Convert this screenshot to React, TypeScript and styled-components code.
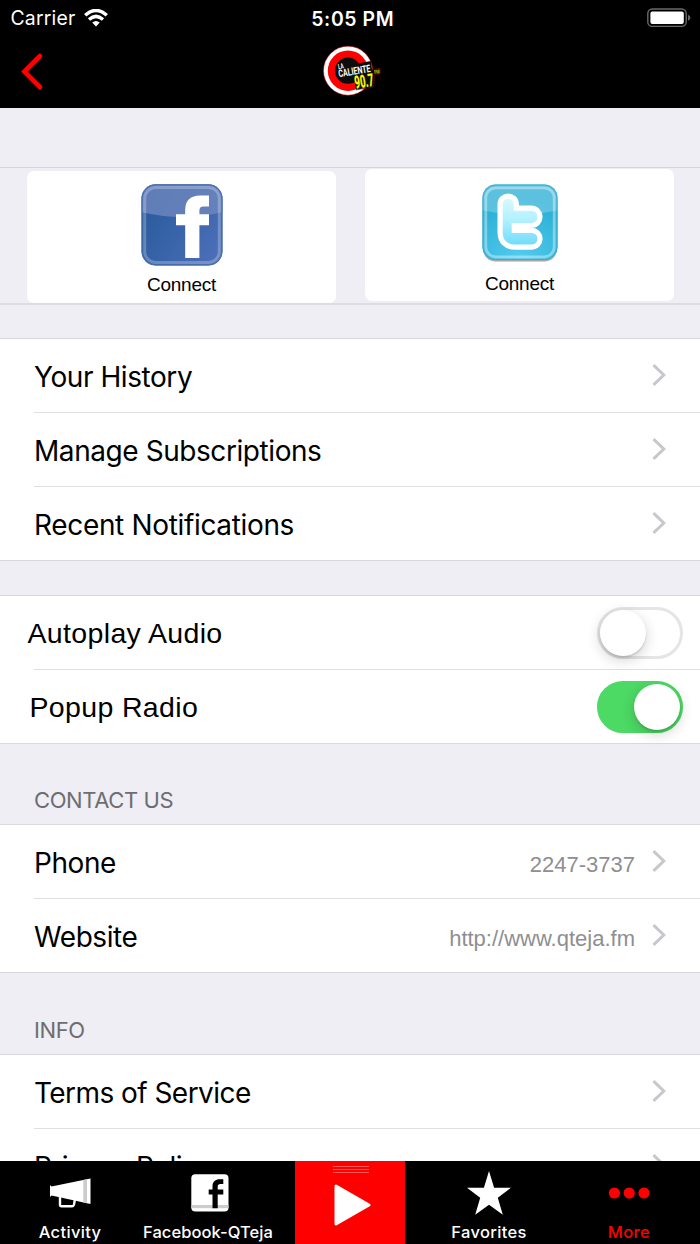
import React from 'react';
import styled, { createGlobalStyle } from 'styled-components';

const GlobalStyles = createGlobalStyle`
  body {
    margin: 0;
    background: #efeef4;
  }

  * {
    box-sizing: border-box;
  }
`;

const WifiIcon = () => (
  <svg width="24" height="18" viewBox="0 0 24 18">
    <g fill="none" stroke="#fff" strokeWidth="3.4">
      <path d="M1.2 6.3 Q12 -3.5 22.8 6.3" />
      <path d="M5 10.6 Q12 4.2 19 10.6" />
    </g>
    <path d="M12 17.4 L8.2 13.6 Q12 10.5 15.8 13.6 Z" fill="#fff" />
  </svg>
);

const BatteryIcon = () => (
  <svg width="44" height="20" viewBox="0 0 44 20">
    <rect x="0.8" y="1" width="38.4" height="17.4" rx="4.5" fill="none" stroke="#69696b" strokeWidth="1.4" />
    <rect x="3.4" y="3.5" width="33.4" height="12.4" rx="2" fill="#fff" />
    <path d="M41 6.8 Q43.4 8 43.4 9.8 Q43.4 11.6 41 12.8 Z" fill="#69696b" />
  </svg>
);

const StationLogo = () => (
  <Logo width="62" height="52" viewBox="320 45 62 52">
    <circle cx="348" cy="70.7" r="24.5" fill="#fff" stroke="#d00" strokeWidth="0.5" />
    <circle cx="348" cy="70.7" r="20.2" fill="#fe0000" />
    <circle cx="348" cy="70.7" r="13.1" fill="#0c0c0c" />
    <path d="M352 64.5 L371 61 L372 69.5 L380 68.5 V74 L374.8 75 L373 87 L356 89.8 L354.5 81 L345 78 Z" fill="#0c0c0c" />
    <path d="M371 61.5 L372.3 69.5 L380 68.3 V74 L375 75 L373.3 87 L356 90" fill="none" stroke="#900" strokeWidth="0.5" />
    <g fill="#fff" fontWeight="700">
      <text transform="translate(338.6 69.2) rotate(-10)" fontSize="7.4" textLength="5.5" lengthAdjust="spacingAndGlyphs">LA</text>
      <text transform="translate(339 77.2) rotate(-9.5)" fontSize="10.4" textLength="32.5" lengthAdjust="spacingAndGlyphs">CALIENTE</text>
    </g>
    <g fill="#ff0" fontWeight="700">
      <text transform="translate(355.6 88.6) rotate(-9)" fontSize="17.5" textLength="19" lengthAdjust="spacingAndGlyphs" stroke="#ff0" strokeWidth="0.3">90.7</text>
      <text transform="translate(374.4 74) rotate(-9)" fontSize="5.4" textLength="5.6" lengthAdjust="spacingAndGlyphs" fill="#d0bd00">FM</text>
    </g>
  </Logo>
);

const FacebookBadge = () => (
  <svg width="82" height="82" viewBox="0 0 82 82">
    <defs>
      <linearGradient id="fbFill" x1="0" y1="0.3" x2="1" y2="0.9">
        <stop offset="0" stopColor="#295a9c" />
        <stop offset="1" stopColor="#4e70ba" />
      </linearGradient>
      <clipPath id="fbClip">
        <rect x="0.5" y="0.3" width="81" height="81.2" rx="14" />
      </clipPath>
    </defs>
    <g clipPath="url(#fbClip)">
      <rect width="82" height="82" fill="url(#fbFill)" />
      <path d="M0 0 H82 V28 Q41 38 0 28 Z" fill="#7289c0" fillOpacity="0.75" />
    </g>
    <rect x="1" y="0.8" width="80" height="80.2" rx="13.5" fill="none" stroke="#4a70ae" strokeWidth="1" />
    <rect x="3.7" y="3.5" width="74.6" height="75" rx="11" fill="none" stroke="#fff" strokeOpacity="0.25" strokeWidth="3" />
    <path d="M44.2 74 V41.2 H35 V30.3 H44.2 V26 C44.2 16 50 11.4 59 11.4 H68 V22.4 H62.5 C59.5 22.4 58.4 24 58.4 26.5 V30.3 H68 V41.2 H58.4 V74 Z" fill="#fff" />
  </svg>
);

const TwitterBadge = () => (
  <svg width="78" height="80" viewBox="0 0 78 80">
    <defs>
      <radialGradient id="twFill" cx="0.5" cy="1" r="0.8">
        <stop offset="0" stopColor="#55cdf0" />
        <stop offset="1" stopColor="#2bafd5" />
      </radialGradient>
      <linearGradient id="twLetter" x1="0" y1="0" x2="0" y2="1">
        <stop offset="0" stopColor="#dcfaff" />
        <stop offset="0.45" stopColor="#b3f1ff" />
        <stop offset="1" stopColor="#6bdaf8" />
      </linearGradient>
      <clipPath id="twClip">
        <rect x="1.5" y="0.5" width="75" height="75.5" rx="13" />
      </clipPath>
    </defs>
    <rect x="1.8" y="2.5" width="74.4" height="75" rx="13" fill="#777" fillOpacity="0.65" />
    <g clipPath="url(#twClip)">
      <rect width="78" height="78" fill="url(#twFill)" />
      <path d="M0 0 H78 V26 Q39 35 0 26 Z" fill="#fff" fillOpacity="0.23" />
    </g>
    <rect x="2" y="1" width="74" height="74.5" rx="12.5" fill="none" stroke="#3caed0" strokeWidth="1" />
    <rect x="4.8" y="3.8" width="68.4" height="69" rx="10" fill="none" stroke="#fff" strokeOpacity="0.38" strokeWidth="2.8" />
    <path
      d="M19.1 20 C19.1 9.5 35.3 9.5 35.3 20 V24.2 H50 C62 24.2 62 41.5 50 41.5 H33.3 V46.4 H50 C62 46.4 62 63.2 50 63.2 H34 C25 63.2 19.1 57.5 19.1 48.5 Z"
      fill="url(#twLetter)"
      stroke="#fff"
      strokeWidth="5.2"
    />
  </svg>
);

const Chevron = () => (
  <svg width="15" height="24" viewBox="0 0 15 24">
    <path d="M1.5 2.2 L11.8 12 L1.5 21.8" fill="none" stroke="#c7c7cc" strokeWidth="3" />
  </svg>
);

const MegaphoneIcon = () => (
  <svg width="44" height="32" viewBox="0 0 44 32">
    <path d="M12 20 V27.8 Q12 29.3 13.5 29.3 H24 Q25.5 29.3 26 27.5 L27 22" fill="none" stroke="#fff" strokeWidth="2.4" />
    <path d="M2 8 L3.5 9.5 L42.5 1.5 V27 L3.5 18.5 L2 20 Z" fill="#fff" />
    <path d="M35.3 3 L39 2.3 V26.3 L35.3 25.5 Z" fill="#ccc" />
  </svg>
);

const FacebookTabIcon = () => (
  <svg width="38" height="38" viewBox="0 0 38 38">
    <rect x="0.3" y="0.3" width="37.2" height="37.2" rx="4" fill="#fff" />
    <rect x="0.3" y="31" width="37.2" height="3.2" fill="#ccc" />
    <path d="M21.5 34.3 V20.5 H17.7 V15.4 H21.5 V12.3 C21.5 7.3 24.5 5.2 28.7 5.2 H32.3 V10 H29.6 C27.4 10 26.7 10.8 26.7 12.7 V15.4 H32.3 V20.5 H26.7 V34.3 Z" fill="#000" />
  </svg>
);

const PlayIcon = () => (
  <svg width="37" height="42" viewBox="0 0 37 42">
    <path d="M2 2 L35 21 L2 40 Z" fill="#fff" stroke="#fff" strokeWidth="3" strokeLinejoin="round" />
  </svg>
);

const StarIcon = () => (
  <svg width="44" height="44" viewBox="0 0 44 44">
    <path d="M22 0 L27.1 16.7 H44 L30.8 26.7 L35.8 43.8 L22 33.8 L8.2 43.8 L13.2 26.7 L0 16.7 H16.9 Z" fill="#fff" />
  </svg>
);

const DotsIcon = () => (
  <svg width="42" height="12" viewBox="0 0 42 12" fill="#fe0000">
    <circle cx="6.4" cy="6" r="5.6" />
    <circle cx="21.2" cy="6" r="5.6" />
    <circle cx="36" cy="6" r="5.6" />
  </svg>
);

const App: React.FC = () => {
  return (
    <Screen>
      <GlobalStyles />
      <TopBar>
        <StatusBar>
          <Carrier>
            Carrier
            <WifiIcon />
          </Carrier>
          <Clock>5:05 PM</Clock>
          <Battery>
            <BatteryIcon />
          </Battery>
        </StatusBar>
        <NavBar>
          <BackButton aria-label="Back">
            <svg width="22" height="37" viewBox="0 0 22 37">
              <path d="M19 3 L3.4 18.5 L19 34.2" fill="none" stroke="#fe0000" strokeWidth="4.6" strokeLinecap="round" />
            </svg>
          </BackButton>
          <StationLogo />
        </NavBar>
      </TopBar>

      <Content>
        <ConnectSection>
          <ConnectCard $offset={3}>
            <BadgeSlot $height={90}>
              <FacebookBadge />
            </BadgeSlot>
            Connect
          </ConnectCard>
          <ConnectCard $offset={1}>
            <BadgeSlot $height={89}>
              <TwitterBadge />
            </BadgeSlot>
            Connect
          </ConnectCard>
        </ConnectSection>

        <Group $gap={33}>
          <Row>
            <Label>Your History</Label>
            <Chevron />
          </Row>
          <Row>
            <Label>Manage Subscriptions</Label>
            <Chevron />
          </Row>
          <Row>
            <Label $spacing={-0.34}>Recent Notifications</Label>
            <Chevron />
          </Row>
        </Group>

        <Group $gap={34}>
          <Row>
            <SwitchLabel $shift={-7}>Autoplay Audio</SwitchLabel>
            <Switch $on={false} role="switch" aria-checked={false}>
              <Knob />
            </Switch>
          </Row>
          <Row>
            <SwitchLabel $shift={-5}>Popup Radio</SwitchLabel>
            <Switch $on role="switch" aria-checked>
              <Knob />
            </Switch>
          </Row>
        </Group>

        <SectionTitle $height={80}>CONTACT US</SectionTitle>
        <Group>
          <Row>
            <Label>Phone</Label>
            <Value>2247-3737</Value>
            <Chevron />
          </Row>
          <Row>
            <Label>Website</Label>
            <Value>http://www.qteja.fm</Value>
            <Chevron />
          </Row>
        </Group>

        <SectionTitle $height={81}>INFO</SectionTitle>
        <Group>
          <Row>
            <Label $spacing={-0.55}>Terms of Service</Label>
            <Chevron />
          </Row>
          <Row>
            <Label $spacing={-0.5}>Privacy Policy</Label>
            <Chevron />
          </Row>
        </Group>
      </Content>

      <TabBar>
        <Tab $width={140}>
          <TabIcon>
            <MegaphoneIcon />
          </TabIcon>
          <TabLabel $spacing={0.35}>Activity</TabLabel>
        </Tab>
        <Tab $width={155} $pull={16}>
          <TabIcon>
            <FacebookTabIcon />
          </TabIcon>
          <TabLabel $spacing={0.08} $shift={-3}>Facebook-QTeja</TabLabel>
        </Tab>
        <PlayTab>
          <Grip />
          <PlayIcon />
        </PlayTab>
        <Tab $width={167}>
          <TabIcon>
            <StarIcon />
          </TabIcon>
          <TabLabel $spacing={0.35} $shift={1}>Favorites</TabLabel>
        </Tab>
        <Tab $width={128} $pull={14} $active>
          <TabIcon>
            <DotsIcon />
          </TabIcon>
          <TabLabel $spacing={0.4}>More</TabLabel>
        </Tab>
      </TabBar>
    </Screen>
  );
};

const Screen = styled.div`
  display: flex;
  flex-direction: column;
  width: 700px;
  height: 1244px;
  overflow: hidden;
  background: #efeef4;
  color: #000;
  font-family: Inter, 'Liberation Sans', sans-serif;
`;

const TopBar = styled.header`
  flex: none;
  height: 108px;
  background: #000;
  color: #fff;
`;

const StatusBar = styled.div`
  display: grid;
  grid-template-columns: 1fr 1fr 1fr;
  align-items: center;
  height: 36px;
  padding: 0 9px 0 10.5px;
  line-height: 24px;
`;

const Carrier = styled.div`
  display: flex;
  align-items: center;
  gap: 9px;
  font-size: 19.4px;
  letter-spacing: 0.2px;
`;

const Clock = styled.div`
  padding: 1px 0 0 4px;
  text-align: center;
  font-size: 19.4px;
  font-weight: 600;
  letter-spacing: 0.6px;
`;

const Battery = styled.div`
  display: flex;
  justify-content: flex-end;
  padding-bottom: 1px;
`;

const NavBar = styled.div`
  display: grid;
  grid-template-columns: 320px 1fr;
  height: 72px;
  padding-top: 9px;
`;

const Logo = styled.svg`
  overflow: visible;
  font-family: Roboto, sans-serif;
`;

const BackButton = styled.button`
  justify-self: start;
  height: 37px;
  margin: 8px 0 0 21px;
  padding: 0;
  border: 0;
  background: none;
`;

const Content = styled.main`
  flex: 1;
  min-height: 0;
  overflow: hidden;
`;

const ConnectSection = styled.section`
  display: grid;
  grid-template-columns: 309px 309px;
  gap: 29px;
  height: 138px;
  margin-top: 59px;
  padding-left: 27px;
  border-top: 1px solid #d5d4d9;
  border-bottom: 2px solid #dddce1;
`;

const ConnectCard = styled.div<{ $offset: number }>`
  display: flex;
  flex-direction: column;
  align-items: center;
  height: 132px;
  margin-top: ${({ $offset }) => $offset - 0.3}px;
  padding-top: ${({ $offset }) => 16.3 - $offset}px;
  border-radius: 7px;
  background: #fff;
  font-family: 'Liberation Sans', Arial, sans-serif;
  font-size: 19px;
  letter-spacing: -0.25px;
  line-height: 22px;
`;

const BadgeSlot = styled.div<{ $height: number }>`
  flex: none;
  height: ${({ $height }) => $height}px;
`;

const Group = styled.section<{ $gap?: number }>`
  margin-top: ${({ $gap }) => $gap ?? 0}px;
  border-top: 1px solid #d9d8dd;
  border-bottom: 1px solid #d9d8dd;
  background: #fff;
`;

const Row = styled.div`
  display: flex;
  align-items: center;
  height: 73px;
  margin-left: 34px;
  padding: 0 33px 1px 0;

  & + & {
    height: 74px;
    border-top: 1px solid #dfdfe2;
  }
`;

const Label = styled.span<{ $spacing?: number }>`
  flex: 1;
  padding-top: 3px;
  font-size: 28px;
  letter-spacing: ${({ $spacing }) => $spacing ?? -0.43}px;
`;

const SwitchLabel = styled.span<{ $shift: number }>`
  flex: 1;
  margin-left: ${({ $shift }) => $shift + 0.5}px;
  padding-top: 3px;
  font-family: 'Liberation Sans', Arial, sans-serif;
  font-size: 28.5px;
  letter-spacing: 0.35px;
`;

const Value = styled.span`
  margin-right: 17px;
  padding-top: 8px;
  color: #8e8e93;
  font-family: 'Liberation Sans', Arial, sans-serif;
  font-size: 22px;
`;

const Switch = styled.div<{ $on: boolean }>`
  display: flex;
  justify-content: ${({ $on }) => ($on ? 'flex-end' : 'flex-start')};
  width: 86px;
  height: 52px;
  margin-top: 1px;
  margin-right: -16px;
  border: 3px solid ${({ $on }) => ($on ? '#4cd964' : '#e5e5e5')};
  border-radius: 26px;
  background: ${({ $on }) => ($on ? '#4cd964' : '#fff')};
`;

const Knob = styled.div`
  width: 46px;
  height: 46px;
  border-radius: 50%;
  background: #fff;
  box-shadow: 0 4px 14px rgba(0, 0, 0, 0.18), 0 2px 2px rgba(0, 0, 0, 0.12);
`;

const SectionTitle = styled.h2<{ $height: number }>`
  height: ${({ $height }) => $height}px;
  margin: 0;
  padding: ${({ $height }) => $height - 38}px 0 0 34px;
  color: #6d6d72;
  font-size: 22px;
  font-weight: 400;
  letter-spacing: -0.4px;
  line-height: 28px;
`;

const TabBar = styled.nav`
  display: flex;
  flex: none;
  height: 83px;
  background: #000;
`;

const Tab = styled.div<{ $width: number; $pull?: number; $active?: boolean }>`
  display: flex;
  flex-direction: column;
  align-items: center;
  width: ${({ $width }) => $width}px;
  padding-right: ${({ $pull }) => $pull ?? 0}px;
  color: ${({ $active }) => ($active ? '#fe0000' : '#fff')};
`;

const TabIcon = styled.div`
  display: flex;
  align-items: center;
  height: 61px;
  padding-top: 3px;
`;

const TabLabel = styled.span<{ $spacing: number; $shift?: number }>`
  margin-left: ${({ $shift }) => $shift ?? 0}px;
  font-size: 16.5px;
  font-weight: 500;
  letter-spacing: ${({ $spacing }) => $spacing}px;
  line-height: 20px;
  white-space: nowrap;
`;

const PlayTab = styled.div`
  display: flex;
  flex-direction: column;
  align-items: center;
  width: 110px;
  padding: 5px 0 0 5px;
  background: #fe0000;
`;

const Grip = styled.div`
  width: 36px;
  height: 8px;
  margin: 0 4px 10px 0;
  background: repeating-linear-gradient(#ff5a5a 0 1px, transparent 1px 3px);
`;

export default App;
